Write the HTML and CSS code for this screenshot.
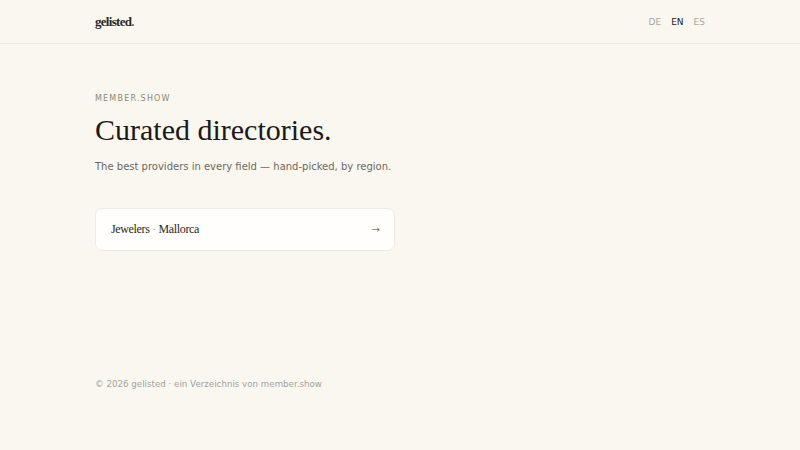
FILE: index.html
```html
<!DOCTYPE html>
<html lang="en">
<head>
<meta charset="utf-8">
<link rel="stylesheet" href="styles.css">
</head>
<body>
<header class="topbar">
  <div class="wrap topbar-inner">
    <a class="logo">gelisted<span class="dot">.</span></a>
    <nav class="langs">
      <a class="lang">DE</a>
      <a class="lang active">EN</a>
      <a class="lang">ES</a>
    </nav>
  </div>
</header>
<main class="wrap main">
  <p class="eyebrow">MEMBER.SHOW</p>
  <h1 class="title">Curated directories.</h1>
  <p class="lead">The best providers in every field — hand-picked, by region.</p>
  <a class="card">
    <span class="card-label">Jewelers <span class="sep">·</span> Mallorca</span>
    <span class="arrow">→</span>
  </a>
</main>
<footer class="wrap footer">© 2026 gelisted · ein Verzeichnis von member.show</footer>
</body>
</html>
```
FILE: styles.css
```css
html, body { margin: 0; padding: 0; }
body {
  background: #faf7f1;
  color: #1c1a17;
  font-family: "DejaVu Sans", sans-serif;
  width: 800px;
  height: 450px;
}
.wrap { width: 610px; margin: 0 auto; }
.topbar { border-bottom: 1px solid #ebe7df; }
.topbar-inner {
  height: 43px;
  display: flex;
  align-items: center;
  justify-content: space-between;
}
.logo {
  font-family: "Liberation Serif", serif;
  font-size: 13px;
  font-weight: 600;
  color: #2a2824;
  letter-spacing: -0.7px;
}
.logo .dot { color: #6f6b55; }
.langs { display: flex; gap: 10px; }
.lang { font-size: 9px; color: #aaa69e; }
.lang.active { color: #1c1a17; }
.main { padding-top: 50px; }
.eyebrow {
  margin: 0;
  font-size: 8px;
  letter-spacing: 1.2px;
  color: #8c8a6c;
}
.title {
  margin: 7px 0 0;
  font-family: "Liberation Serif", serif;
  font-weight: normal;
  font-size: 30px;
  line-height: 40px;
  color: #1c1a17;
}
.lead {
  margin: 11px 0 0;
  font-size: 10px;
  color: #6b6862;
}
.card {
  margin-top: 36px;
  width: 300px;
  height: 43px;
  box-sizing: border-box;
  background: #fffefc;
  border: 1px solid #efebe4;
  border-radius: 7px;
  display: flex;
  align-items: center;
  justify-content: space-between;
  padding: 0 14px 0 15px;
}
.card-label {
  font-family: "Liberation Serif", serif;
  font-size: 12px;
  letter-spacing: -0.35px;
  color: #2a2824;
}
.sep { color: #aaa6a0; }
.arrow { font-size: 10px; color: #7f7a4e; }
.footer {
  margin-top: 128px;
  font-size: 8.7px;
  color: #a5a29b;
}
```
